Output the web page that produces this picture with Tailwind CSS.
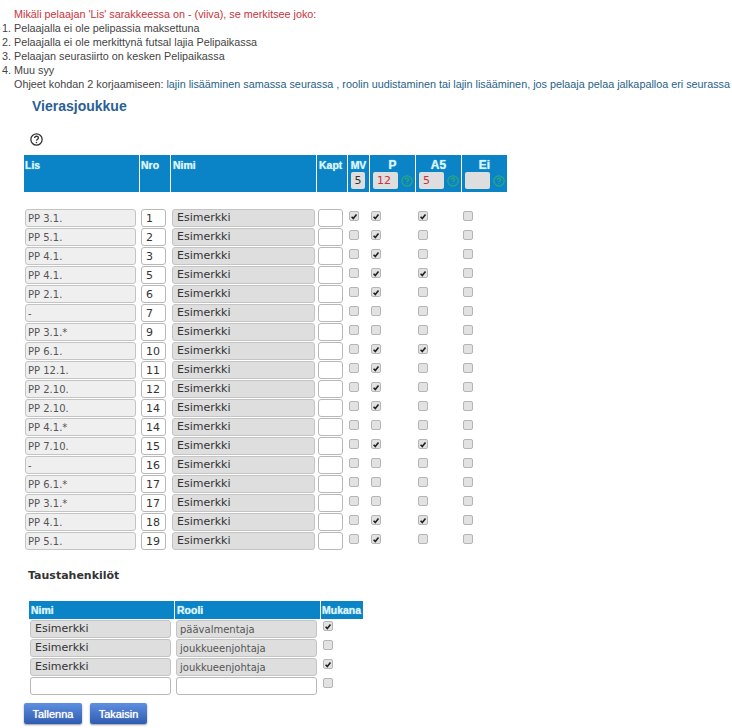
<!DOCTYPE html>
<html lang="en">
<head>
  <meta charset="UTF-8">
  <title>Vierasjoukkue</title>
  <script src="https://cdn.jsdelivr.net/npm/@tailwindcss/browser@4"></script>
</head>
<body class="bg-white font-['Liberation_Sans',sans-serif] text-[10.8px] leading-[14px] text-[#444] w-[732px] h-[728px] overflow-hidden">

  <!-- Info text -->
  <div class="pt-[7px] pl-[2px] whitespace-nowrap">
    <p class="pl-[12px] text-[#c8323c]">Mikäli pelaajan 'Lis' sarakkeessa on - (viiva), se merkitsee joko:</p>
    <p>1. Pelaajalla ei ole pelipassia maksettuna</p>
    <p>2. Pelaajalla ei ole merkittynä futsal lajia Pelipaikassa</p>
    <p>3. Pelaajan seurasiirto on kesken Pelipaikassa</p>
    <p>4. Muu syy</p>
    <p class="pl-[12px]">Ohjeet kohdan 2 korjaamiseen: <span class="text-[#1f5f88]">lajin lisääminen samassa seurassa , roolin uudistaminen tai lajin lisääminen, jos pelaaja pelaa jalkapalloa eri seurassa</span></p>
  </div>

  <h2 class="pl-[32px] pt-[7px] text-[14px] leading-[16px] font-bold text-[#2a5f96]">Vierasjoukkue</h2>

  <!-- Help icon -->
  <div class="pl-[30px] pt-[19px] h-[38px]">
    <svg class="w-[13px] h-[13px]" viewBox="0 0 12 12" fill="none" stroke="#333" stroke-width="1.2">
      <circle cx="6" cy="6" r="5.2"/>
      <path d="M4.2 4.7c0-1.1.8-1.7 1.8-1.7s1.8.6 1.8 1.5c0 1.2-1.8 1.3-1.8 2.6"/>
      <path d="M6 8.2v1.2"/>
    </svg>
  </div>

  <!-- Players header -->
  <div class="ml-[24px] mt-[3px] w-[483px] h-[37px] grid grid-cols-[115px_30px_145px_30px_21px_45px_45px_45px] gap-x-[1px] text-[#d8f4ff] font-bold text-[10.5px] leading-[14px] [text-shadow:0_0_1px_#bfeaff]">
    <div class="bg-[#0a84c6] pl-[1px] pt-[3px]">Lis</div>
    <div class="bg-[#0a84c6] pl-[1px] pt-[3px]">Nro</div>
    <div class="bg-[#0a84c6] pl-[2px] pt-[3px]">Nimi</div>
    <div class="bg-[#0a84c6] pl-[2px] pt-[3px]">Kapt</div>
    <div class="bg-[#0a84c6] text-center pt-[3px]">MV
      <div class="ml-[3px] w-[14px] h-[17px] bg-[#dedede] rounded-[2px] font-['DejaVu_Sans',sans-serif] font-normal text-[11px] leading-[17px] text-[#333] [text-shadow:none]">5</div>
    </div>
    <div class="bg-[#0a84c6] text-center pt-[3px] text-[12px]">P
      <div class="flex items-center pl-[3px] gap-[3px]">
        <div class="w-[25px] h-[17px] pl-[4px] text-left bg-[#dedede] rounded-[2px] font-['DejaVu_Sans',sans-serif] font-normal text-[11px] leading-[17px] text-[#c8323c] [text-shadow:none]">12</div>
        <svg class="w-[12px] h-[12px]" viewBox="0 0 12 12" fill="none" stroke="#2fa878" stroke-width="1.2"><circle cx="6" cy="6" r="5.2"/><path d="M4.3 4.8c0-1 .8-1.6 1.7-1.6s1.7.6 1.7 1.4c0 1.2-1.7 1.2-1.7 2.5M6 8.2v1.1"/></svg>
      </div>
    </div>
    <div class="bg-[#0a84c6] text-center pt-[3px] text-[12px]">A5
      <div class="flex items-center pl-[3px] gap-[3px]">
        <div class="w-[25px] h-[17px] pl-[4px] text-left bg-[#dedede] rounded-[2px] font-['DejaVu_Sans',sans-serif] font-normal text-[11px] leading-[17px] text-[#c8323c] [text-shadow:none]">5</div>
        <svg class="w-[12px] h-[12px]" viewBox="0 0 12 12" fill="none" stroke="#2fa878" stroke-width="1.2"><circle cx="6" cy="6" r="5.2"/><path d="M4.3 4.8c0-1 .8-1.6 1.7-1.6s1.7.6 1.7 1.4c0 1.2-1.7 1.2-1.7 2.5M6 8.2v1.1"/></svg>
      </div>
    </div>
    <div class="bg-[#0a84c6] text-center pt-[3px] text-[12px]">Ei
      <div class="flex items-center pl-[3px] gap-[3px]">
        <div class="w-[25px] h-[17px] bg-[#dedede] rounded-[2px]"></div>
        <svg class="w-[12px] h-[12px]" viewBox="0 0 12 12" fill="none" stroke="#2fa878" stroke-width="1.2"><circle cx="6" cy="6" r="5.2"/><path d="M4.3 4.8c0-1 .8-1.6 1.7-1.6s1.7.6 1.7 1.4c0 1.2-1.7 1.2-1.7 2.5M6 8.2v1.1"/></svg>
      </div>
    </div>
  </div>

  <!-- Players -->
  <div id="players" class="mt-[17px] ml-[25px] flex flex-col gap-y-[1px]"></div>

  <h3 class="pl-[28px] mt-[19px] font-['DejaVu_Sans',sans-serif] text-[11px] leading-[14px] font-bold text-[#333]">Taustahenkilöt</h3>

  <!-- Staff -->
  <div class="ml-[29px] mt-[18px] w-[334px] h-[18px] grid grid-cols-[145px_145px_42px] gap-x-[1px] bg-white text-[#d8f4ff] font-bold text-[10.5px] leading-[18px] [text-shadow:0_0_1px_#bfeaff]">
    <div class="bg-[#0a84c6] pl-[2px]">Nimi</div>
    <div class="bg-[#0a84c6] pl-[2px]">Rooli</div>
    <div class="bg-[#0a84c6] pl-[1px]">Mukana</div>
  </div>
  <div id="staff" class="ml-[30px] mt-[1px] flex flex-col gap-y-[1px]"></div>

  <div class="ml-[24px] mt-[8px] flex gap-x-[8px]">
    <button class="w-[58px] h-[21px] rounded-[2px] bg-gradient-to-b from-[#5f8fe0] to-[#2f5cb0] text-white text-[11px] [text-shadow:0_0_1px_#fff] shadow-[0_1px_2px_#99a]">Tallenna</button>
    <button class="w-[57px] h-[21px] rounded-[2px] bg-gradient-to-b from-[#5f8fe0] to-[#2f5cb0] text-white text-[11px] [text-shadow:0_0_1px_#fff] shadow-[0_1px_2px_#99a]">Takaisin</button>
  </div>

  <script>
    const tick = '<svg class="w-[9px] h-[9px]" viewBox="0 0 9 9" fill="none" stroke="#222" stroke-width="1.8"><path d="M1.8 4.8l1.9 2 3.6-4.6"/></svg>';

    function box(checked, cls) {
      return `<div class="${cls} w-[10px] h-[10px] rounded-[2px] border border-[#b5b5b5] bg-[#e2e2e2] flex items-center justify-center">${checked ? tick : ''}</div>`;
    }

    // lis, nro, mv, p, a5
    const players = [
      ['PP 3.1.', 1, 1, 1, 1], ['PP 5.1.', 2, 0, 1, 0], ['PP 4.1.', 3, 0, 1, 0],
      ['PP 4.1.', 5, 0, 1, 1], ['PP 2.1.', 6, 0, 1, 0], ['-', 7, 0, 0, 0],
      ['PP 3.1.*', 9, 0, 0, 0], ['PP 6.1.', 10, 0, 1, 1], ['PP 12.1.', 11, 0, 1, 0],
      ['PP 2.10.', 12, 0, 1, 0], ['PP 2.10.', 14, 0, 1, 0], ['PP 4.1.*', 14, 0, 0, 0],
      ['PP 7.10.', 15, 0, 1, 1], ['-', 16, 0, 0, 0], ['PP 6.1.*', 17, 0, 0, 0],
      ['PP 3.1.*', 17, 0, 0, 0], ['PP 4.1.', 18, 0, 1, 1], ['PP 5.1.', 19, 0, 1, 0]
    ];

    document.getElementById('players').innerHTML = players.map(p => `
      <div class="flex h-[18px] font-['DejaVu_Sans',sans-serif] text-[#333]">
        <div class="w-[111px] h-[18px] pl-[2px] rounded-[3px] border border-[#c4c4c4] bg-[#efefef] text-[10px] leading-[17px] text-[#555]">${p[0]}</div>
        <div class="ml-[5px] w-[25px] h-[18px] pl-[4px] rounded-[3px] border border-[#b8b8b8] bg-white text-[11px] leading-[17px]">${p[1]}</div>
        <div class="ml-[6px] w-[143px] h-[18px] pl-[4px] rounded-[3px] border border-[#c4c4c4] bg-[#dedede] text-[11px] leading-[15px]">Esimerkki</div>
        <div class="ml-[3px] w-[25px] h-[18px] rounded-[3px] border border-[#b8b8b8] bg-white"></div>
        ${box(p[2], 'ml-[6px] mt-[2px]')}
        ${box(p[3], 'ml-[12px] mt-[2px]')}
        ${box(p[4], 'ml-[37px] mt-[2px]')}
        ${box(0, 'ml-[35px] mt-[2px]')}
      </div>`).join('');

    const staff = [
      ['Esimerkki', 'päävalmentaja', 1], ['Esimerkki', 'joukkueenjohtaja', 0],
      ['Esimerkki', 'joukkueenjohtaja', 1], ['', '', 0]
    ];

    document.getElementById('staff').innerHTML = staff.map(s => `
      <div class="flex h-[18px] font-['DejaVu_Sans',sans-serif] text-[11px] text-[#333]">
        <div class="w-[141px] h-[18px] pl-[4px] rounded-[3px] border ${s[0] ? 'border-[#c4c4c4] bg-[#dedede]' : 'border-[#b8b8b8] bg-white'} leading-[15px]">${s[0]}</div>
        <div class="ml-[5px] w-[141px] h-[18px] pl-[3px] rounded-[3px] border ${s[0] ? 'border-[#c4c4c4] bg-[#dedede]' : 'border-[#b8b8b8] bg-white'} text-[10px] leading-[17px] text-[#555]">${s[1]}</div>
        ${box(s[2], 'ml-[6px] mt-[1px]')}
      </div>`).join('');
  </script>
</body>
</html>
